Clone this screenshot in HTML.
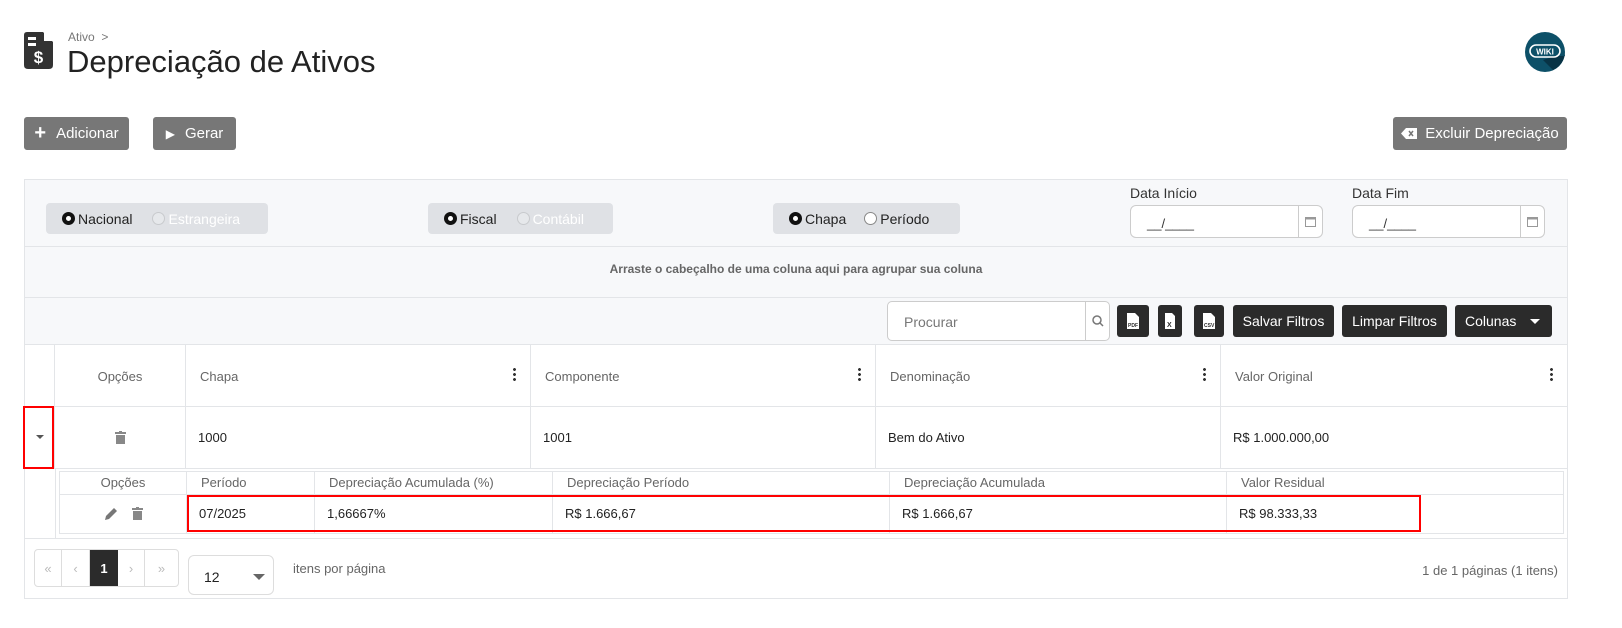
<!DOCTYPE html>
<html><head><meta charset="utf-8"><style>
*{box-sizing:border-box;margin:0;padding:0}
body{width:1622px;height:628px;background:#fff;font-family:"Liberation Sans",sans-serif;position:relative;overflow:hidden;color:#222}
.a{position:absolute}
.btn{position:absolute;background:#777;color:#fff;border-radius:3px;font-size:15px;display:flex;align-items:center;justify-content:center;gap:10px}
.dk{position:absolute;background:#2b2b2b;color:#fff;border-radius:3px;font-size:14px;display:flex;align-items:center;justify-content:center}
.rg{position:absolute;background:#dfe1e5;border-radius:4px;height:31px;display:flex;align-items:center;font-size:14px;padding-left:16px}
.r{width:13px;height:13px;border-radius:50%;display:inline-block;margin-right:3px}
.on{background:#fff;border:4px solid #111}
.off{border:1px solid #c8cacd;background:#e6e8eb}
.lbl{font-size:14px;color:#333}
.inp{position:absolute;border:1px solid #ccc;border-radius:6px;background:#fff;height:33px;font-size:13px;color:#333}
.hd{position:absolute;top:345px;height:62px;border-right:1px solid #e3e5e8;font-size:13px;color:#666;display:flex;align-items:center;padding-left:14px}
.dot{position:absolute;right:14px;top:22px;width:3px;height:14px;background:radial-gradient(circle,#333 1.3px,transparent 1.6px) 0 0/3px 5px}
.cell{position:absolute;top:407px;height:61px;border-right:1px solid #e3e5e8;font-size:13px;display:flex;align-items:center;padding-left:12px}
.sh{position:absolute;top:472px;height:22px;border-right:1px solid #e3e5e8;font-size:13px;color:#666;padding-left:14px;line-height:22px}
.sc{position:absolute;top:494px;height:39px;border-right:1px solid #e3e5e8;font-size:13px;display:flex;align-items:center;padding-left:12px}
</style></head><body>
<svg class="a" style="left:24px;top:32px" width="29" height="37" viewBox="0 0 29 37"><path d="M3 0H19L29 10V33Q29 37 25 37H4Q0 37 0 33V3Q0 0 3 0Z" fill="#333"/><path d="M20 0V9H29" fill="#fff"/><rect x="4" y="5" width="8" height="3" fill="#fff"/><rect x="4" y="11" width="8" height="3" fill="#fff"/><text x="14.5" y="31" font-size="17" font-weight="bold" fill="#fff" text-anchor="middle" font-family="Liberation Sans">$</text></svg>
<div class="a" style="left:68px;top:30px;font-size:12px;color:#777">Ativo &nbsp;&gt;</div>
<div class="a" style="left:67px;top:44px;font-size:31px;color:#222">Depreciação de Ativos</div>
<svg class="a" style="left:1525px;top:32px" width="40" height="40" viewBox="0 0 40 40"><circle cx="20" cy="20" r="20" fill="#0d5068"/><path d="M30 24 L40 24 L40 20 A20 20 0 0 1 28 38 L18 28Z" fill="#083345"/><rect x="5" y="13" width="30" height="12" rx="6" fill="none" stroke="#fff" stroke-width="1.6"/><text x="20" y="22.5" font-size="8" font-weight="bold" fill="#fff" text-anchor="middle" font-family="Liberation Sans">WIKI</text></svg>
<div class="btn" style="left:24px;top:117px;width:105px;height:33px"><span style="font-size:20px;font-weight:bold">+</span>Adicionar</div>
<div class="btn" style="left:153px;top:117px;width:83px;height:33px"><span style="font-size:12px">▶</span>Gerar</div>
<div class="btn" style="left:1393px;top:117px;width:174px;height:33px;gap:8px"><svg width="16" height="11" viewBox="0 0 16 11"><path d="M5 0H16V11H5L0 5.5Z" fill="#fff"/><path d="M8 3L12 8M12 3L8 8" stroke="#777" stroke-width="1.5"/></svg>Excluir Depreciação</div>
<div class="a" style="left:24px;top:179px;width:1544px;height:420px;border:1px solid #e3e5e8;background:#fff"></div>
<div class="a" style="left:25px;top:180px;width:1542px;height:165px;background:#f7f8fa"></div>
<div class="a" style="left:25px;top:246px;width:1542px;height:1px;background:#e3e5e8"></div>
<div class="a" style="left:25px;top:297px;width:1542px;height:1px;background:#e3e5e8"></div>
<div class="a" style="left:25px;top:344px;width:1542px;height:1px;background:#e3e5e8"></div>
<div class="rg" style="left:46px;top:203px;width:222px"><span class="r on"></span>Nacional<span class="r off" style="margin-left:20px"></span><span style="color:#fff">Estrangeira</span></div>
<div class="rg" style="left:428px;top:203px;width:185px"><span class="r on"></span>Fiscal<span class="r off" style="margin-left:20px"></span><span style="color:#fff">Contábil</span></div>
<div class="rg" style="left:773px;top:203px;width:187px"><span class="r on"></span>Chapa<span class="r off" style="margin-left:18px;background:#fff;border-color:#888"></span>Período</div>
<div class="a lbl" style="left:1130px;top:185px">Data Início</div>
<div class="inp" style="left:1130px;top:205px;width:193px"><span class="a" style="left:16px;top:10px">__/____</span><div class="a" style="right:0;top:0;width:24px;height:31px;border-left:1px solid #ccc;display:flex;align-items:center;justify-content:center"><svg width="11" height="11"><rect x="0.5" y="1.5" width="10" height="9" fill="none" stroke="#999"/><rect x="0.5" y="1.5" width="10" height="2" fill="#999"/></svg></div></div>
<div class="a lbl" style="left:1352px;top:185px">Data Fim</div>
<div class="inp" style="left:1352px;top:205px;width:193px"><span class="a" style="left:16px;top:10px">__/____</span><div class="a" style="right:0;top:0;width:24px;height:31px;border-left:1px solid #ccc;display:flex;align-items:center;justify-content:center"><svg width="11" height="11"><rect x="0.5" y="1.5" width="10" height="9" fill="none" stroke="#999"/><rect x="0.5" y="1.5" width="10" height="2" fill="#999"/></svg></div></div>
<div class="a" style="left:25px;top:262px;width:1542px;text-align:center;font-size:12px;font-weight:bold;color:#666">Arraste o cabeçalho de uma coluna aqui para agrupar sua coluna</div>
<div class="inp" style="left:887px;top:301px;width:223px;height:40px;border-radius:5px"><span class="a" style="left:16px;top:12px;color:#777;font-size:14px">Procurar</span><div class="a" style="right:0;top:0;width:24px;height:38px;border-left:1px solid #ccc;display:flex;align-items:center;justify-content:center"><svg width="12" height="12"><circle cx="5" cy="5" r="4" fill="none" stroke="#777" stroke-width="1.5"/><path d="M8 8L11 11" stroke="#777" stroke-width="1.5"/></svg></div></div>
<div class="dk" style="left:1117px;top:305px;width:32px;height:32px"><svg width="12" height="16"><path d="M0 0H8L12 4V16H0Z" fill="#fff"/><text x="1" y="14" font-size="5" fill="#2b2b2b" font-weight="bold">PDF</text></svg></div>
<div class="dk" style="left:1158px;top:305px;width:24px;height:32px"><svg width="10" height="16"><path d="M0 0H7L10 3V16H0Z" fill="#fff"/><text x="2" y="14" font-size="7" fill="#2b2b2b" font-weight="bold">X</text></svg></div>
<div class="dk" style="left:1194px;top:305px;width:30px;height:32px"><svg width="12" height="16"><path d="M0 0H8L12 4V16H0Z" fill="#fff"/><text x="1" y="14" font-size="5" fill="#2b2b2b" font-weight="bold">CSV</text></svg></div>
<div class="dk" style="left:1233px;top:305px;width:101px;height:32px">Salvar Filtros</div>
<div class="dk" style="left:1342px;top:305px;width:105px;height:32px">Limpar Filtros</div>
<div class="dk" style="left:1455px;top:305px;width:97px;height:32px;justify-content:flex-start;padding-left:10px">Colunas<span class="a" style="right:12px;top:14px;border:5px solid transparent;border-top-color:#fff"></span></div>
<div class="hd" style="left:25px;width:30px"></div>
<div class="hd" style="left:55px;width:131px;justify-content:center;padding:0">Opções</div>
<div class="hd" style="left:186px;width:345px">Chapa<span class="dot"></span></div>
<div class="hd" style="left:531px;width:345px">Componente<span class="dot"></span></div>
<div class="hd" style="left:876px;width:345px">Denominação<span class="dot"></span></div>
<div class="hd" style="left:1221px;width:346px;border-right:0">Valor Original<span class="dot"></span></div>
<div class="a" style="left:25px;top:406px;width:1542px;height:1px;background:#e3e5e8"></div>
<div class="cell" style="left:25px;width:30px"></div>
<div class="a" style="left:36px;top:435px;border:4px solid transparent;border-top:4px solid #555"></div>
<div class="cell" style="left:55px;width:131px;justify-content:center;padding:0"><svg width="11" height="13"><rect x="0" y="1" width="11" height="2" fill="#888"/><rect x="4" y="0" width="3" height="2" fill="#888"/><rect x="1" y="4" width="9" height="9" fill="#888"/></svg></div>
<div class="cell" style="left:186px;width:345px">1000</div>
<div class="cell" style="left:531px;width:345px">1001</div>
<div class="cell" style="left:876px;width:345px">Bem do Ativo</div>
<div class="cell" style="left:1221px;width:346px;border-right:0">R$ 1.000.000,00</div>
<div class="a" style="left:25px;top:468px;width:1542px;height:1px;background:#e3e5e8"></div>
<div class="a" style="left:55px;top:468px;width:1px;height:70px;background:#e3e5e8"></div>
<div class="a" style="left:59px;top:471px;width:1505px;height:63px;border:1px solid #e3e5e8"></div>
<div class="a" style="left:60px;top:494px;width:1503px;height:1px;background:#e3e5e8"></div>
<div class="sh" style="left:60px;width:127px;text-align:center;padding:0">Opções</div>
<div class="sh" style="left:187px;width:128px">Período</div>
<div class="sh" style="left:315px;width:238px">Depreciação Acumulada (%)</div>
<div class="sh" style="left:553px;width:337px">Depreciação Período</div>
<div class="sh" style="left:890px;width:337px">Depreciação Acumulada</div>
<div class="sh" style="left:1227px;width:336px;border:0">Valor Residual</div>
<div class="sc" style="left:60px;width:127px;justify-content:center;padding:0;gap:14px"><svg width="14" height="14"><path d="M1 13L2 9L10 1L13 4L5 12Z" fill="#777"/></svg><svg width="11" height="13"><rect x="0" y="1" width="11" height="2" fill="#888"/><rect x="4" y="0" width="3" height="2" fill="#888"/><rect x="1" y="4" width="9" height="9" fill="#888"/></svg></div>
<div class="sc" style="left:187px;width:128px">07/2025</div>
<div class="sc" style="left:315px;width:238px">1,66667%</div>
<div class="sc" style="left:553px;width:337px">R$ 1.666,67</div>
<div class="sc" style="left:890px;width:337px">R$ 1.666,67</div>
<div class="sc" style="left:1227px;width:336px;border:0">R$ 98.333,33</div>
<div class="a" style="left:25px;top:538px;width:1542px;height:1px;background:#e3e5e8"></div>
<div class="a" style="left:23px;top:406px;width:31px;height:63px;border:2px solid #f00"></div>
<div class="a" style="left:187px;top:495px;width:1234px;height:37px;border:2px solid #f00"></div>
<div class="a" style="left:34px;top:549px;width:145px;height:38px;border:1px solid #ddd;border-radius:4px;display:flex;font-size:13px;color:#bbb">
<div style="width:27px;border-right:1px solid #ddd;display:flex;align-items:center;justify-content:center">«</div>
<div style="width:28px;border-right:1px solid #ddd;display:flex;align-items:center;justify-content:center">‹</div>
<div style="width:28px;background:#2b2b2b;color:#fff;font-weight:bold;display:flex;align-items:center;justify-content:center">1</div>
<div style="width:27px;border-right:1px solid #ddd;display:flex;align-items:center;justify-content:center">›</div>
<div style="flex:1;display:flex;align-items:center;justify-content:center">»</div></div>
<div class="a" style="left:188px;top:555px;width:86px;height:40px;border:1px solid #ddd;border-radius:6px;font-size:14px"><span class="a" style="left:15px;top:13px">12</span><span class="a" style="right:8px;top:18px;border:6px solid transparent;border-top:6px solid #666"></span></div>
<div class="a" style="left:293px;top:561px;font-size:13px;color:#666">itens por página</div>
<div class="a" style="right:64px;top:563px;font-size:13px;color:#666">1 de 1 páginas (1 itens)</div>
</body></html>
